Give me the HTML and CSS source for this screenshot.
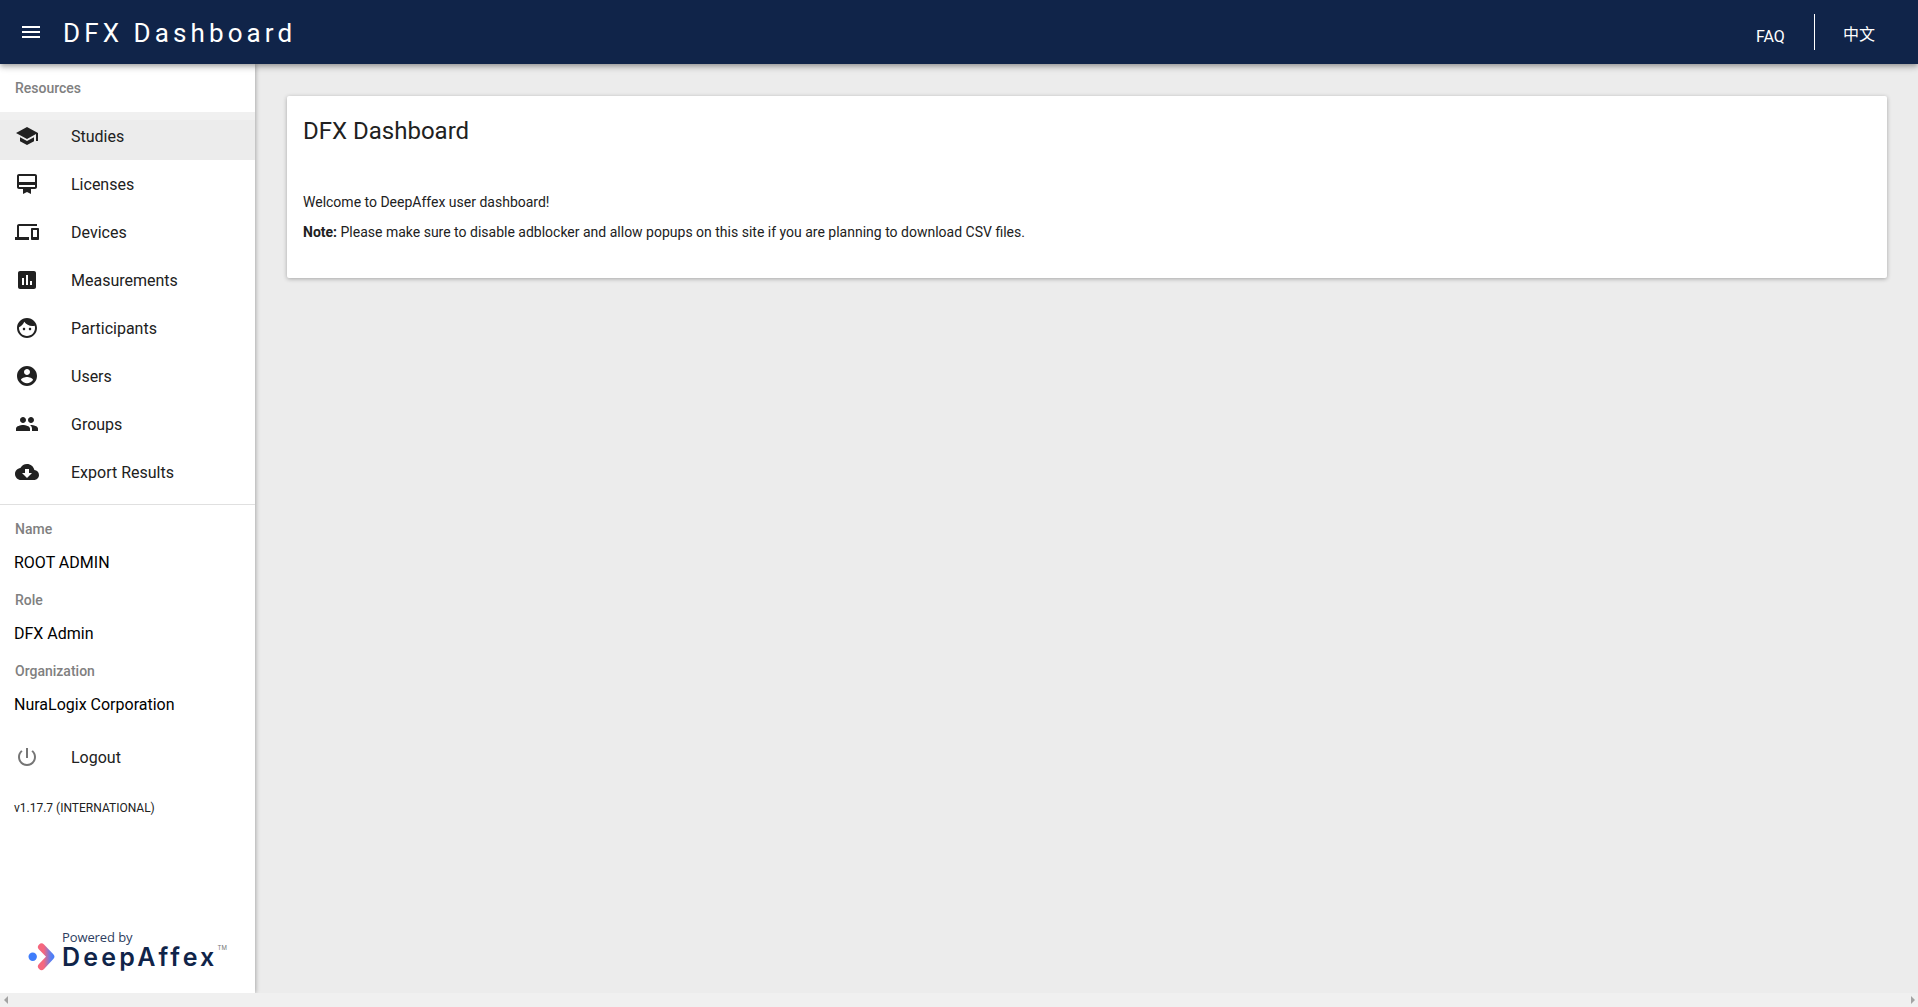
FILE: index.html
```html
<!DOCTYPE html>
<html lang="en">
<head>
<meta charset="utf-8">
<title>DFX Dashboard</title>
<link rel="stylesheet" href="styles.css">
</head>
<body>
<div class="app">
  <header class="topbar">
    <svg class="menu-icon" viewBox="0 0 24 24"><path d="M3 18h18v-2H3v2zm0-5h18v-2H3v2zm0-7v2h18V6H3z"/></svg>
    <h1 class="brand">DFX Dashboard</h1>
    <div class="top-actions">
      <span class="faq">FAQ</span>
      <span class="top-divider"></span>
      <span class="lang">中文</span>
    </div>
  </header>
  <div class="body-row">
    <aside class="drawer">
      <div class="section-label resources">Resources</div>
      <nav class="nav">
        <div class="nav-item active"><svg class="icon" viewBox="0 0 24 24"><path d="M5 13.18v4L12 21l7-3.82v-4L12 17l-7-3.82zM12 3L1 9l11 6 9-4.91V17h2V9L12 3z"/></svg><span>Studies</span></div>
        <div class="nav-item"><svg class="icon" viewBox="0 0 24 24"><path d="M20 2H4c-1.11 0-2 .89-2 2v11c0 1.11.89 2 2 2h4v5l4-2 4 2v-5h4c1.11 0 2-.89 2-2V4c0-1.11-.89-2-2-2zm0 13H4v-2h16v2zm0-5H4V4h16v6z"/></svg><span>Licenses</span></div>
        <div class="nav-item"><svg class="icon" viewBox="0 0 24 24"><path d="M4 6h18V4H4c-1.1 0-2 .9-2 2v11H0v3h14v-3H4V6zm19 2h-6c-.55 0-1 .45-1 1v10c0 .55.45 1 1 1h6c.55 0 1-.45 1-1V9c0-.55-.45-1-1-1zm-1 9h-4v-7h4v7z"/></svg><span>Devices</span></div>
        <div class="nav-item"><svg class="icon" viewBox="0 0 24 24"><path d="M19 3H5c-1.1 0-2 .9-2 2v14c0 1.1.9 2 2 2h14c1.1 0 2-.9 2-2V5c0-1.1-.9-2-2-2zM9 17H7v-7h2v7zm4 0h-2V7h2v10zm4 0h-2v-4h2v4z"/></svg><span>Measurements</span></div>
        <div class="nav-item"><svg class="icon" viewBox="0 0 24 24"><path d="M9 11.75c-.69 0-1.25.56-1.25 1.25s.56 1.25 1.25 1.25 1.25-.56 1.25-1.25-.56-1.25-1.25-1.25zm6 0c-.69 0-1.25.56-1.25 1.25s.56 1.25 1.25 1.25 1.25-.56 1.25-1.25-.56-1.25-1.25-1.25zM12 2C6.48 2 2 6.48 2 12s4.48 10 10 10 10-4.48 10-10S17.52 2 12 2zm0 18c-4.41 0-8-3.59-8-8 0-.29.02-.58.05-.86 2.36-1.05 4.23-2.98 5.21-5.37C11.07 8.33 14.05 10 17.42 10c.78 0 1.53-.09 2.25-.26.21.71.33 1.47.33 2.26 0 4.41-3.59 8-8 8z"/></svg><span>Participants</span></div>
        <div class="nav-item"><svg class="icon" viewBox="0 0 24 24"><path d="M12 2C6.48 2 2 6.48 2 12s4.48 10 10 10 10-4.48 10-10S17.52 2 12 2zm0 3c1.66 0 3 1.34 3 3s-1.34 3-3 3-3-1.34-3-3 1.34-3 3-3zm0 14.2c-2.5 0-4.71-1.28-6-3.22.03-1.99 4-3.08 6-3.08 1.99 0 5.97 1.09 6 3.08-1.29 1.94-3.5 3.22-6 3.22z"/></svg><span>Users</span></div>
        <div class="nav-item"><svg class="icon" viewBox="0 0 24 24"><path d="M16 11c1.66 0 2.99-1.34 2.99-3S17.66 5 16 5c-1.66 0-3 1.34-3 3s1.34 3 3 3zm-8 0c1.66 0 2.99-1.34 2.99-3S9.66 5 8 5C6.34 5 5 6.34 5 8s1.34 3 3 3zm0 2c-2.33 0-7 1.17-7 3.5V19h14v-2.5c0-2.33-4.67-3.5-7-3.5zm8 0c-.29 0-.62.02-.97.05 1.16.84 1.97 1.97 1.97 3.45V19h6v-2.5c0-2.33-4.67-3.5-7-3.5z"/></svg><span>Groups</span></div>
        <div class="nav-item"><svg class="icon" viewBox="0 0 24 24"><path d="M19.35 10.04C18.67 6.59 15.64 4 12 4 9.11 4 6.6 5.64 5.35 8.04 2.34 8.36 0 10.91 0 14c0 3.31 2.69 6 6 6h13c2.76 0 5-2.24 5-5 0-2.64-2.05-4.78-4.65-4.96zM17 13l-5 5-5-5h3V9h4v4h3z"/></svg><span>Export Results</span></div>
      </nav>
      <hr class="rule">
      <div class="section-label">Name</div>
      <div class="value">ROOT ADMIN</div>
      <div class="section-label">Role</div>
      <div class="value">DFX Admin</div>
      <div class="section-label">Organization</div>
      <div class="value">NuraLogix Corporation</div>
      <div class="nav-item logout"><svg class="icon muted" viewBox="0 0 24 24"><path d="M13 3h-2v10h2V3zm4.83 2.17l-1.42 1.42C17.99 7.86 19 9.81 19 12c0 3.87-3.13 7-7 7s-7-3.13-7-7c0-2.19 1.01-4.14 2.58-5.42L6.17 5.17C4.23 6.82 3 9.26 3 12c0 4.97 4.03 9 9 9s9-4.03 9-9c0-2.74-1.23-5.18-3.17-6.83z"/></svg><span>Logout</span></div>
      <div class="version">v1.17.7 (INTERNATIONAL)</div>
      <div class="logo">
        <svg class="logo-mark" viewBox="0 0 30 30">
          <defs><linearGradient id="lg" gradientUnits="userSpaceOnUse" x1="11" x2="27" y1="0" y2="0"><stop offset="0.3" stop-color="#f5677e"/><stop offset="0.75" stop-color="#5a7ff2"/><stop offset="1" stop-color="#3f7dfb"/></linearGradient></defs>
          <circle cx="4.700" cy="14.700" r="4.200" fill="#3f7dfb"/>
          <polyline points="13.500,5 22.800,14.700 13.500,24.500" fill="none" stroke="url(#lg)" stroke-width="7" stroke-linecap="round" stroke-linejoin="round"/>
        </svg>
        <div class="logo-text">
          <div class="powered">Powered by</div>
          <div class="wordmark">DeepAffex<sup class="tm">TM</sup></div>
        </div>
      </div>
    </aside>
    <main class="content">
      <section class="card">
        <h2 class="card-title">DFX Dashboard</h2>
        <p class="welcome">Welcome to DeepAffex user dashboard!</p>
        <p class="note"><strong>Note:</strong> Please make sure to disable adblocker and allow popups on this site if you are planning to download CSV files.</p>
      </section>
    </main>
  </div>
  <div class="hscroll">
    <span class="arrow left"></span>
    <span class="arrow right"></span>
  </div>
</div>
</body>
</html>
```
FILE: styles.css
```css
* { box-sizing: border-box; }
html, body { margin: 0; height: 100%; overflow: hidden; }
body { font-family: Roboto, "Noto Sans CJK SC", sans-serif; background: #ececec; color: #212121; }
.app { height: 1007px; display: flex; flex-direction: column; }

.topbar { position: relative; z-index: 3; height: 64px; flex: none; background: #102449; color: #fff; display: flex; align-items: center; padding-left: 19px; box-shadow: 0 2px 4px -1px rgba(0,0,0,.2), 0 4px 5px rgba(0,0,0,.14), 0 1px 10px rgba(0,0,0,.12); }
.menu-icon { width: 24px; height: 24px; fill: #fff; flex: none; margin-top: -1px; }
.brand { margin: 2px 0 0 20px; font-size: 26px; font-weight: 400; letter-spacing: 4.1px; line-height: 32px; }
.top-actions { margin-left: auto; display: flex; align-items: center; height: 100%; }
.faq { font-size: 16px; margin-top: 8px; width: 30px; }
.top-divider { width: 1px; height: 36px; background: #fff; margin: 0 28px 0 28px; }
.lang { font-size: 16px; width: 32px; margin-right: 43px; margin-top: 2px; }

.body-row { flex: 1; min-height: 0; display: flex; }
.drawer { position: relative; z-index: 2; width: 255px; flex: none; background: #fff; display: flex; flex-direction: column; box-shadow: 1px 0 4px rgba(0,0,0,.28); }
.section-label { font-size: 14px; font-weight: 500; color: #808080; line-height: 20px; padding-left: 15px; margin-top: 15px; }
.section-label.resources { margin-top: 14px; margin-bottom: 14px; }
.nav { display: flex; flex-direction: column; }
.nav-item { height: 48px; display: flex; align-items: center; padding-left: 15px; font-size: 16px; color: #212121; }
.nav-item span { margin-left: 32px; }
.nav-item.active { background: linear-gradient(#f0f0f0 8px, #ececec 8px); }
.icon { width: 24px; height: 24px; fill: #212121; flex: none; }
.icon.muted { fill: #757575; }
.rule { margin: 8px 0 0; border: 0; border-top: 1px solid #e0e0e0; height: 1px; }
.rule + .section-label { margin-top: 14px; }
.value { font-size: 16px; line-height: 24px; color: #000; padding-left: 14px; margin-top: 12px; }
.logout { margin-top: 16px; }
.version { font-size: 12px; line-height: 16px; padding-left: 14px; margin-top: 19px; color: #212121; }
.logo { margin-top: auto; margin-bottom: 21px; display: flex; align-items: flex-end; padding-left: 28px; }
.logo-mark { width: 30px; height: 30px; flex: none; }
.logo-text { margin-left: 4px; margin-bottom: 4px; color: #102449; }
.powered { font-family: "Open Sans", sans-serif; font-size: 13px; line-height: 13px; letter-spacing: -.1px; color: #2d3d60; margin-bottom: 2px; }
.wordmark { font-family: Inter, sans-serif; font-size: 25px; font-weight: 600; line-height: 22px; letter-spacing: 3.2px; white-space: nowrap; }
.tm { font-size: 6px; font-weight: 400; letter-spacing: 0; color: #777; vertical-align: 16px; line-height: 0; margin-left: 0; }

.content { flex: 1; min-width: 0; padding: 32px 31px 0 32px; }
.card { background: #fff; height: 182px; padding: 19px 16px 16px; border-radius: 2px; box-shadow: 0 1px 4px rgba(0,0,0,.3); }
.card-title { margin: 0; font-size: 24px; font-weight: 400; line-height: 32px; color: #212121; }
.welcome { margin: 45px 0 0; font-size: 14px; line-height: 20px; }
.note { margin: 10px 0 0; font-size: 14px; line-height: 20px; }
.note strong { font-weight: 700; }

.hscroll { height: 14px; flex: none; background: #f0f0f0; position: relative; z-index: 4; display: flex; justify-content: space-between; align-items: center; padding: 0 3px 0 4px; }
.arrow { width: 0; height: 0; border-top: 4px solid transparent; border-bottom: 4px solid transparent; }
.arrow.left { border-right: 4px solid #a3a3a3; }
.arrow.right { border-left: 4px solid #a3a3a3; }
```
